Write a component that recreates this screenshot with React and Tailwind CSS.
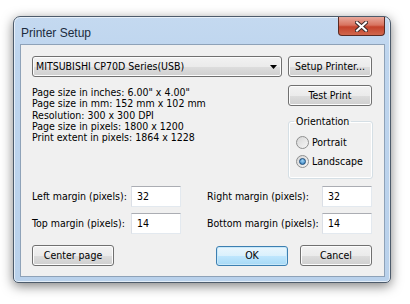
import React from "react";

const btn =
  "flex items-center justify-center h-[21px] rounded-[3px] border border-[#707070] bg-[linear-gradient(180deg,#f2f2f2_0%,#ebebeb_50%,#dddddd_51%,#cfcfcf_100%)] shadow-[inset_0_0_0_1px_#fcfcfc] text-black";

const Radio = ({ checked, label }) => (
  <div className="flex items-center h-[19px]">
    <div className="w-[13px] h-[13px] rounded-full border border-[#8e8f8f] bg-[linear-gradient(135deg,#d6d6d6,#f6f6f6)] flex items-center justify-center ml-[7px]">
      {checked && (
        <div className="w-[7px] h-[7px] rounded-full border border-[#1c4c7a] bg-[radial-gradient(circle_at_50%_35%,#9fd4f7,#2c78b8)]" />
      )}
    </div>
    <span className="ml-[3px]">{label}</span>
  </div>
);

const MarginField = ({ label, value, labelWidth }) => (
  <div className="flex items-center h-[21px]">
    <span style={{ width: labelWidth }}>{label}</span>
    <div className="w-[50px] h-[21px] bg-white border border-[#abadb3] border-l-[#dbdfe6] border-r-[#e3e9ef] border-b-[#e3e9ef] flex items-center pl-[5px]">
      {value}
    </div>
  </div>
);

const App = () => {
  return (
    <div className="w-[410px] h-[304px] bg-white pt-[16px] pl-[13px] font-['DejaVu_Sans',Verdana,sans-serif] font-stretch-condensed text-[10.5px] text-black">
      <div className="w-[378px] h-[267px] rounded-t-[7px] rounded-b-[5px] border border-[#4d5b6b] bg-[linear-gradient(180deg,#c4d9f0_0%,#bed5ee_15%,#b9d1eb_100%)] shadow-[0_3px_12px_rgba(0,0,0,0.5),inset_0_0_0_1px_rgba(255,255,255,0.6)] flex flex-col">
        <div className="h-[27px] flex items-start justify-between pl-[7px]">
          <span className="mt-[7px] text-[12px] text-[#1b2b3d] font-['Liberation_Sans',Arial,sans-serif] font-stretch-normal">
            Printer Setup
          </span>
          <div className="w-[47px] h-[19px] mr-[5px] rounded-b-[4px] border border-t-0 border-[#5a2a22] bg-[linear-gradient(180deg,#e9a99c_0%,#d8735f_45%,#c4422b_55%,#d0674c_100%)] flex items-center justify-center">
            <svg width="13" height="11" viewBox="0 0 13 11">
              <path d="M2 1.5 L11 9.5 M11 1.5 L2 9.5" stroke="#3b2a2a" strokeWidth="4" strokeLinecap="square" />
              <path d="M2 1.5 L11 9.5 M11 1.5 L2 9.5" stroke="#ffffff" strokeWidth="2" strokeLinecap="square" />
            </svg>
          </div>
        </div>
        <div className="mx-[6px] w-[365px] h-[233px] border border-[#8ea2b8] bg-[#f0f0f0] pl-[11px] pt-[11px]">
          <div className="flex items-center gap-[6px]">
            <div className="w-[250px] h-[21px] rounded-[3px] border border-[#707070] bg-[linear-gradient(180deg,#f2f2f2_0%,#ebebeb_50%,#dddddd_51%,#cfcfcf_100%)] shadow-[inset_0_0_0_1px_#fcfcfc] flex items-center justify-between pl-[3px] pr-[4px]">
              <span>MITSUBISHI CP70D Series(USB)</span>
              <svg width="7" height="4" viewBox="0 0 7 4">
                <path d="M0 0 H7 L3.5 4 Z" fill="#000" />
              </svg>
            </div>
            <div className={`${btn} w-[84px]`}>Setup Printer...</div>
          </div>

          <div className="flex mt-[8px]">
            <div className="w-[256px] pt-[2px] leading-[11.3px]">
              <div>Page size in inches: 6.00" x 4.00"</div>
              <div>Page size in mm: 152 mm x 102 mm</div>
              <div>Resolution: 300 x 300 DPI</div>
              <div>Page size in pixels: 1800 x 1200</div>
              <div>Print extent in pixels: 1864 x 1228</div>
            </div>
            <div className="w-[85px] flex flex-col">
              <div className={`${btn} w-[84px] h-[20px]`}>Test Print</div>
              <fieldset className="mt-[9px] w-[85px] h-[64px] border border-[#d5dfe5] rounded-[3px] shadow-[inset_0_0_0_1px_#fff]">
                <legend className="ml-[5px] px-[2px] leading-[13px]">Orientation</legend>
                <div className="pt-[5px]">
                  <Radio label="Portrait" />
                  <Radio label="Landscape" checked />
                </div>
              </fieldset>
            </div>
          </div>

          <div className="grid grid-cols-[175px_165px] mt-[7px] gap-y-[6px]">
            <MarginField label="Left margin (pixels):" value="32" labelWidth={99} />
            <MarginField label="Right margin (pixels):" value="32" labelWidth={115} />
            <MarginField label="Top margin (pixels):" value="14" labelWidth={99} />
            <MarginField label="Bottom margin (pixels):" value="14" labelWidth={115} />
          </div>

          <div className="flex items-center mt-[11px]">
            <div className={`${btn} w-[82px] h-[20px]`}>Center page</div>
            <div className="ml-[102px] w-[72px] h-[20px] rounded-[3px] border border-[#3c7fb1] bg-[linear-gradient(180deg,#eaf6fd_0%,#d9f0fc_50%,#bee6fd_51%,#a7d9f5_100%)] shadow-[inset_0_0_0_1px_#c8e8f9] flex items-center justify-center">
              OK
            </div>
            <div className={`${btn} ml-[12px] w-[72px] h-[20px]`}>Cancel</div>
          </div>
        </div>
      </div>
    </div>
  );
};

export default App;
